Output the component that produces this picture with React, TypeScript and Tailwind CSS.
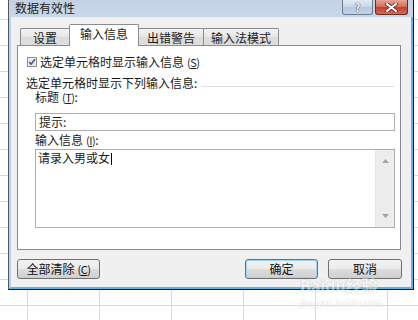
import type { ReactNode } from "react";

const font = "font-['Noto_Sans_CJK_SC','Noto_Sans',sans-serif]";

function Key({ k }: { k: string }) {
  return (
    <span className="ml-[3px] text-[11px] leading-none tracking-[-0.5px]">
      (<span className="underline underline-offset-1">{k}</span>)
    </span>
  );
}

function Tab({ label, className }: { label: string; className: string }) {
  return (
    <div
      className={`flex items-center justify-center border-[#898c95] text-[12px] leading-none text-[#1a1a1a] ${className}`}
    >
      {label}
    </div>
  );
}

function Button({ children, className = "" }: { children: ReactNode; className?: string }) {
  return (
    <button
      className={`flex h-[20px] items-center justify-center rounded-[3px] border border-[#707070] bg-[linear-gradient(to_bottom,#f2f2f2_0%,#ebebeb_50%,#dddddd_51%,#cfcfcf_100%)] text-[12px] leading-none text-[#111] ${className}`}
    >
      {children}
    </button>
  );
}

export default function App() {
  return (
    <div
      className={`relative h-[320px] w-[418px] overflow-hidden bg-white ${font} [background-image:linear-gradient(to_right,#d9d9d9_1px,transparent_1px),linear-gradient(to_bottom,#d9d9d9_1px,transparent_1px)] [background-position:27px_19px] [background-size:72px_26px]`}
    >
      <div className="ml-[8px] flex h-[290px] w-[406px] flex-col border-x border-b border-l-[#555] border-r-[#111] border-b-[#111]">
        {/* title bar */}
        <div className="flex h-[17px] items-start bg-[linear-gradient(to_bottom,#c2d2e4,#c9d8e9)]">
          <span className="mt-[1px] pl-[6px] text-[12px] leading-[14px] text-[#222]">数据有效性</span>
          <div className="ml-auto mr-[5px] flex gap-[2px]">
            <div className="flex h-[15px] w-[31px] items-center justify-center rounded-b-[3px] border border-t-0 border-[#6b7b90] bg-[linear-gradient(to_bottom,#e3ebf5,#c7d6e8_50%,#b4c7dd_51%,#c4d5e8)] text-[11px] font-bold leading-none text-white [text-shadow:0_0_1px_#333,0_0_1px_#333]">
              ?
            </div>
            <div className="flex h-[15px] w-[33px] items-center justify-center rounded-b-[3px] border border-t-0 border-[#6e2a22] bg-[linear-gradient(to_bottom,#e4a497,#d0695a_50%,#c2412f_51%,#d36a55)]">
              <svg width="13" height="9" viewBox="0 0 13 9">
                <path d="M2 1 L11 8 M11 1 L2 8" stroke="#3b1a16" strokeWidth="3.4" strokeLinecap="square" />
                <path d="M2 1 L11 8 M11 1 L2 8" stroke="#fff" strokeWidth="2" strokeLinecap="square" />
              </svg>
            </div>
          </div>
        </div>

        {/* client area */}
        <div className="flex flex-1 flex-col border-x-2 border-b-2 border-l-[#b5d2ee] border-r-[#5ab3ea] border-b-[#5ab3ea] bg-[#f0f0f0]">
          {/* tabs */}
          <div className="ml-[6px] mt-[7px] flex h-[21px] items-end pl-[3px]">
            <Tab
              label="设置"
              className="h-[17px] w-[49px] rounded-tl-[2px] border-l border-t bg-[linear-gradient(to_bottom,#f3f3f3,#e6e6e6_50%,#dcdcdc_51%,#dedede)] pt-[1px]"
            />
            <Tab
              label="输入信息"
              className="relative z-10 -mb-px h-[22px] w-[70px] rounded-t-[2px] border-x border-t bg-white pb-[3px]"
            />
            <Tab
              label="出错警告"
              className="h-[17px] w-[64px] border-t bg-[linear-gradient(to_bottom,#f3f3f3,#e6e6e6_50%,#dcdcdc_51%,#dedede)] pt-[1px]"
            />
            <Tab
              label="输入法模式"
              className="h-[17px] w-[76px] rounded-tr-[2px] border-x border-t bg-[linear-gradient(to_bottom,#f3f3f3,#e6e6e6_50%,#dcdcdc_51%,#dedede)] pt-[1px]"
            />
          </div>

          {/* panel */}
          <div className="ml-[6px] flex h-[205px] w-[384px] flex-col border border-[#898c95] bg-white text-[12px] leading-[14px] text-[#1a1a1a]">
            <div className="mt-[9px] flex h-[14px] items-center pl-[9px]">
              <svg width="10" height="10" viewBox="0 0 10 10" className="shrink-0">
                <rect x="0.5" y="0.5" width="9" height="9" fill="#f4f4f4" stroke="#8e8f8f" />
                <rect x="1.5" y="1.5" width="7" height="7" fill="#e3e5e8" />
                <path d="M2.2 5 L4 7.2 L8 2.3" fill="none" stroke="#3d5a99" strokeWidth="1.6" />
              </svg>
              <span className="ml-[3px]">
                选定单元格时显示输入信息
                <Key k="S" />
              </span>
            </div>

            <div className="mt-[7px] flex h-[13px] items-start pl-[8px] pr-[6px]">
              <span className="leading-[13px]">选定单元格时显示下列输入信息:</span>
              <div className="ml-[4px] mt-[10px] h-px flex-1 bg-[#d5dfe5]" />
            </div>

            <div className="mt-px flex h-[14px] items-center pl-[17px]">
              标题
              <Key k="T" />:
            </div>

            <div className="ml-[17px] mt-[9px] flex h-[18px] w-[360px] items-center border border-[#abadb3] bg-white pl-[3px]">
              提示:
            </div>

            <div className="mt-[2px] flex h-[14px] items-center pl-[17px]">
              输入信息
              <Key k="I" />:
            </div>

            <div className="ml-[17px] mt-[2px] flex h-[79px] w-[360px] border border-[#abadb3] bg-white">
              <div className="flex-1 pl-[2px] pt-[1px]">
                请录入男或女
                <span className="ml-px inline-block h-[12px] w-px translate-y-[2px] bg-black" />
              </div>
              <div className="flex w-[19px] flex-col items-center justify-between border-l border-[#e6e6e6] bg-[#ededed] py-[9px]">
                <svg width="7" height="4" viewBox="0 0 7 4">
                  <path d="M0 4 L3.5 0 L7 4 Z" fill="#a5a5a5" />
                </svg>
                <svg width="7" height="4" viewBox="0 0 7 4">
                  <path d="M0 0 L7 0 L3.5 4 Z" fill="#a5a5a5" />
                </svg>
              </div>
            </div>
          </div>

          {/* buttons */}
          <div className="ml-[6px] mr-[9px] mt-[9px] flex">
            <Button className="w-[83px]">
              全部清除
              <Key k="C" />
            </Button>
            <Button className="ml-auto w-[73px] border-[#3c7fb1] shadow-[inset_0_0_0_1px_#9fd6f7]">确定</Button>
            <Button className="ml-[10px] w-[74px]">取消</Button>
          </div>
        </div>
      </div>

      {/* baidu watermark */}
      <div className="pointer-events-none absolute left-[300px] top-[277px] flex flex-col items-start opacity-50">
        <span className="text-[16px] font-bold leading-[16px] text-white [text-shadow:0_0_1px_#9a9a9a,0_0_1px_#9a9a9a]">
          Baidu经验
        </span>
        <span className="mt-[6px] text-[9px] font-bold leading-[9px] text-white [text-shadow:0_0_1px_#9a9a9a]">
          jingyan.baidu.com
        </span>
      </div>
    </div>
  );
}
